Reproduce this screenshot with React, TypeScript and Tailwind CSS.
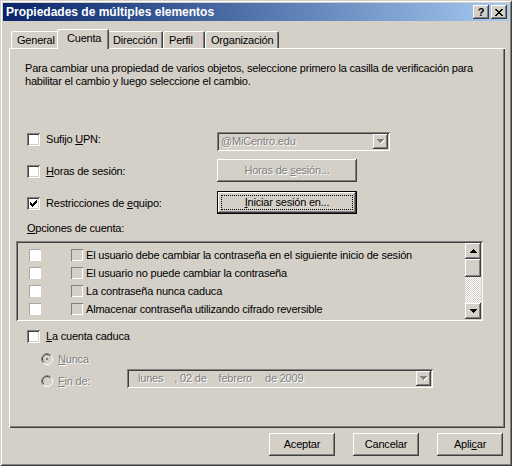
import type { ReactNode } from 'react';

const raised =
  'bg-[#d4d0c8] shadow-[inset_-1px_-1px_#404040,inset_1px_1px_#ffffff,inset_-2px_-2px_#808080,inset_2px_2px_#d4d0c8]';
const sunken =
  'shadow-[inset_1px_1px_#808080,inset_-1px_-1px_#ffffff,inset_2px_2px_#404040,inset_-2px_-2px_#d4d0c8]';
const disabledText = 'text-[#808080] [text-shadow:1px_1px_0_#ffffff]';

function U({ children }: { children: ReactNode }) {
  return <span className="underline underline-offset-[1px]">{children}</span>;
}

function Check() {
  // classic 7x7 check mark, drawn column by column
  const cols = [2, 3, 4, 3, 2, 1, 0];
  return (
    <svg width="7" height="7" viewBox="0 0 7 7" className="block">
      {cols.map((y, x) => (
        <rect key={x} x={x} y={y} width="1" height="3" fill="#000" />
      ))}
    </svg>
  );
}

function CheckBox({ checked = false }: { checked?: boolean }) {
  return (
    <div className={`w-[13px] h-[13px] shrink-0 bg-white flex items-center justify-center ${sunken}`}>
      {checked && <Check />}
    </div>
  );
}

function Radio({ dot = false }: { dot?: boolean }) {
  return (
    <svg width="12" height="12" viewBox="0 0 12 12" className="block shrink-0">
      <circle cx="6" cy="6" r="5.5" fill="#d4d0c8" stroke="#ffffff" />
      <circle cx="6" cy="6" r="4.5" fill="none" stroke="#d4d0c8" />
      <path d="M2.1 9.9 A5.5 5.5 0 0 1 9.9 2.1" fill="none" stroke="#808080" />
      <path d="M2.8 9.2 A4.5 4.5 0 0 1 9.2 2.8" fill="none" stroke="#404040" />
      {dot && <rect x="5" y="5" width="2" height="2" fill="#808080" />}
    </svg>
  );
}

function Arrow({ up = false, color = '#000' }: { up?: boolean; color?: string }) {
  const rows = [
    [0, 7],
    [1, 5],
    [2, 3],
    [3, 1],
  ];
  return (
    <svg width="7" height="4" viewBox="0 0 7 4" className={`block ${up ? 'rotate-180' : ''}`}>
      {rows.map(([y, w]) => (
        <rect key={y} x={(7 - w) / 2} y={y} width={w} height="1" fill={color} />
      ))}
    </svg>
  );
}

function DisabledArrow() {
  return (
    <div className="relative w-[8px] h-[5px]">
      <div className="absolute left-[1px] top-[1px]">
        <Arrow color="#ffffff" />
      </div>
      <div className="absolute left-0 top-0">
        <Arrow color="#808080" />
      </div>
    </div>
  );
}

function CloseGlyph() {
  const rows = [0, 1, 2, 3, 4, 5, 6];
  return (
    <svg width="8" height="7" viewBox="0 0 8 7" className="block">
      {rows.map((i) => (
        <g key={i}>
          <rect x={i} y={i} width="2" height="1" fill="#000" />
          <rect x={6 - i} y={i} width="2" height="1" fill="#000" />
        </g>
      ))}
    </svg>
  );
}

const tabs = [
  { label: 'General', w: 'w-[48px]' },
  { label: 'Cuenta', w: 'w-[52px]', active: true },
  { label: 'Dirección', w: 'w-[56px]' },
  { label: 'Perfil', w: 'w-[42px]' },
  { label: 'Organización', w: 'w-[74px]' },
];

const options = [
  'El usuario debe cambiar la contraseña en el siguiente inicio de sesión',
  'El usuario no puede cambiar la contraseña',
  'La contraseña nunca caduca',
  'Almacenar contraseña utilizando cifrado reversible',
];

export default function App() {
  return (
    <div className="w-[512px] h-[466px] p-[3px] flex flex-col bg-[#d4d0c8] text-black text-[11px] leading-[13px] tracking-[-0.2px] font-['Liberation_Sans',Arial,sans-serif] shadow-[inset_1px_1px_#d4d0c8,inset_-1px_-1px_#404040,inset_2px_2px_#ffffff,inset_-2px_-2px_#808080] overflow-hidden">
      {/* title bar */}
      <div className="h-[18px] flex items-center pl-[3px] pr-[2px] bg-linear-to-r from-[#0a246a] to-[#a6caf0]">
        <span className="text-white font-bold text-[12px] tracking-normal">Propiedades de múltiples elementos</span>
        <div className="ml-auto flex gap-[2px]">
          <div className={`w-[16px] h-[14px] flex items-center justify-center font-bold text-[11px] leading-none ${raised}`}>
            ?
          </div>
          <div className={`w-[16px] h-[14px] flex items-center justify-center ${raised}`}>
            <CloseGlyph />
          </div>
        </div>
      </div>

      {/* tabs */}
      <div className="mt-[8px] h-[19px] flex items-end pl-[8px]">
        {tabs.map((t) =>
          t.active ? (
            <div
              key={t.label}
              className={`${t.w} h-[20px] -mx-[2px] -mb-[1px] relative z-10 pl-[10px] pt-[3px] bg-[#d4d0c8] rounded-t-[2px] shadow-[inset_1px_1px_#ffffff,inset_-1px_0_#404040,inset_-2px_0_#808080]`}
            >
              {t.label}
            </div>
          ) : (
            <div
              key={t.label}
              className={`${t.w} h-[17px] pl-[6px] pt-[3px] bg-[#d4d0c8] rounded-t-[2px] shadow-[inset_1px_1px_#ffffff,inset_-1px_0_#404040,inset_-2px_0_#808080]`}
            >
              {t.label}
            </div>
          ),
        )}
      </div>

      {/* panel */}
      <div className="ml-[6px] w-[496px] h-[380px] flex flex-col shadow-[inset_1px_1px_#ffffff,inset_-1px_-1px_#404040,inset_-2px_-2px_#808080]">
        <p className="mt-[14px] ml-[16px]">
          Para cambiar una propiedad de varios objetos, seleccione primero la casilla de verificación para
          <br />
          habilitar el cambio y luego seleccione el cambio.
        </p>

        {/* Sufijo UPN */}
        <div className="mt-[44px] ml-[18px] flex items-start">
          <div className="w-[190px] h-[13px] mt-[1px] flex items-center gap-[6px]">
            <CheckBox />
            <span>
              Sufijo <U>U</U>PN:
            </span>
          </div>
          <div className={`w-[173px] h-[19px] flex items-center pl-[4px] pr-[2px] ${sunken}`}>
            <span className={`flex-1 ${disabledText}`}>@MiCentro.edu</span>
            <div className={`w-[15px] h-[15px] flex items-center justify-center ${raised}`}>
              <DisabledArrow />
            </div>
          </div>
        </div>

        {/* Horas de sesión */}
        <div className="mt-[8px] ml-[18px] flex items-start">
          <div className="w-[190px] h-[13px] mt-[6px] flex items-center gap-[6px]">
            <CheckBox />
            <span>
              <U>H</U>oras de sesión:
            </span>
          </div>
          <div className={`w-[140px] h-[23px] flex items-center justify-center ${raised} ${disabledText}`}>
            <span>
              Horas de <U>s</U>esión...
            </span>
          </div>
        </div>

        {/* Restricciones de equipo */}
        <div className="mt-[9px] ml-[18px] flex items-start">
          <div className="w-[190px] h-[13px] mt-[6px] flex items-center gap-[6px]">
            <CheckBox checked />
            <span>
              Restricciones de <U>e</U>quipo:
            </span>
          </div>
          <div className="w-[140px] h-[23px] border border-black">
            <div
              className={`w-full h-full flex items-center justify-center outline-1 outline-dotted outline-black -outline-offset-[4px] ${raised}`}
            >
              <span>
                <U>I</U>niciar sesión en...
              </span>
            </div>
          </div>
        </div>

        <div className="mt-[8px] ml-[18px]">
          <U>O</U>pciones de cuenta:
        </div>

        {/* account options list */}
        <div className={`mt-[6px] ml-[7px] w-[467px] h-[80px] flex bg-[#d4d0c8] ${sunken}`}>
          <div className="flex-1 pt-[5px] flex flex-col">
            {options.map((o) => (
              <div key={o} className="h-[18px] flex items-center">
                <div className="ml-[13px] w-[12px] h-[12px] bg-white shadow-[inset_1px_1px_#a8a8a8]" />
                <div className="ml-[30px] w-[12px] h-[12px] shadow-[inset_1px_1px_#808080,inset_-1px_-1px_#ffffff]" />
                <span className="ml-[3px]">{o}</span>
              </div>
            ))}
          </div>
          <div className="w-[16px] my-[2px] mr-[2px] flex flex-col">
            <div className={`h-[16px] flex items-center justify-center ${raised}`}>
              <Arrow up />
            </div>
            <div className={`h-[18px] ${raised}`} />
            <div className="flex-1 bg-[repeating-conic-gradient(#ffffff_0%_25%,#d4d0c8_0%_50%)] bg-size-[2px_2px]" />
            <div className={`h-[16px] flex items-center justify-center ${raised}`}>
              <Arrow />
            </div>
          </div>
        </div>

        {/* La cuenta caduca */}
        <div className="mt-[9px] ml-[18px] h-[13px] flex items-center gap-[6px]">
          <CheckBox />
          <span>
            <U>L</U>a cuenta caduca
          </span>
        </div>

        <div className="mt-[10px] ml-[32px] h-[12px] flex items-center gap-[5px]">
          <Radio dot />
          <span className={disabledText}>
            <U>N</U>unca
          </span>
        </div>

        <div className="mt-[4px] ml-[32px] flex items-start">
          <div className="w-[86px] h-[12px] mt-[6px] flex items-center gap-[5px]">
            <Radio />
            <span className={disabledText}>
              <U>F</U>in de:
            </span>
          </div>
          <div className={`w-[306px] h-[19px] flex items-center pl-[11px] pr-[2px] ${sunken}`}>
            <div className={`flex-1 flex whitespace-pre ${disabledText}`}>
              <span>lunes</span>
              <span className="ml-[11px]">, 02 de</span>
              <span className="ml-[12px]">febrero</span>
              <span className="ml-[13px]">de 2009</span>
            </div>
            <div className={`w-[15px] h-[15px] flex items-center justify-center ${raised}`}>
              <DisabledArrow />
            </div>
          </div>
        </div>
      </div>

      {/* dialog buttons */}
      <div className="mt-[5px] pr-[6px] flex justify-end gap-[18px]">
        <div className={`w-[66px] h-[23px] flex items-center justify-center ${raised}`}>Aceptar</div>
        <div className={`w-[66px] h-[23px] flex items-center justify-center ${raised}`}>Cancelar</div>
        <div className={`w-[66px] h-[23px] flex items-center justify-center ${raised}`}>
          <span>
            Apli<U>c</U>ar
          </span>
        </div>
      </div>
    </div>
  );
}
